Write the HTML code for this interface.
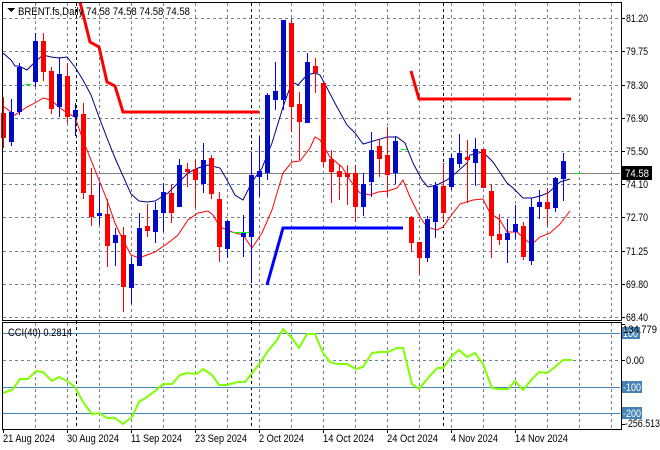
<!DOCTYPE html>
<html><head><meta charset="utf-8"><style>
html,body{margin:0;padding:0;background:#fff}
svg{display:block}
text{font-family:"Liberation Sans",sans-serif;font-size:11px;fill:#000}
</style></head><body>
<svg width="660" height="450" viewBox="0 0 660 450" xmlns="http://www.w3.org/2000/svg" shape-rendering="crispEdges">
<rect width="660" height="450" fill="#fff"/>
<g stroke="#708090" stroke-dasharray="3,3" stroke-width="1">
<path d="M3 18.5H620M3 51.5H620M3 85.5H620M3 118.5H620M3 151.5H620M3 184.5H620M3 217.5H620M3 251.5H620M3 284.5H620M3 317.5H620"/>
<path d="M35.5 3V320M67.5 3V320M99.5 3V320M131.5 3V320M163.5 3V320M195.5 3V320M227.5 3V320M259.5 3V320M291.5 3V320M323.5 3V320M355.5 3V320M387.5 3V320M419.5 3V320M451.5 3V320M483.5 3V320M515.5 3V320M547.5 3V320M579.5 3V320M611.5 3V320"/>
<path d="M35.5 323V429M67.5 323V429M99.5 323V429M131.5 323V429M163.5 323V429M195.5 323V429M227.5 323V429M259.5 323V429M291.5 323V429M323.5 323V429M355.5 323V429M387.5 323V429M419.5 323V429M451.5 323V429M483.5 323V429M515.5 323V429M547.5 323V429M579.5 323V429M611.5 323V429"/>
<path d="M3 360.5H620"/>
</g>
<g stroke="#000" stroke-dasharray="3,3"><path d="M76.5 3V429M251.5 3V429M443.5 3V429"/></g>
<path d="M3 173.5H620" stroke="#808080"/>
<g stroke="#4682b4"><path d="M3 333.5H620M3 387.5H620M3 413.5H620"/></g>
<g shape-rendering="auto" fill="none">
<polyline stroke="#ff0000" stroke-width="3" points="80,2 90,42 99,47 107,82 115,86 123,112 259,112"/>
<polyline stroke="#ff0000" stroke-width="3" points="411,71 419,99 571,99"/>
<polyline stroke="#0000ff" stroke-width="3" points="267,285 283,228 403,228"/>
<polyline stroke="#000080" stroke-width="1" points="3,53 11,60 15,66 19,66 27,70 35,62 43,55 51,57 59,58 67,57 75,67 83,80 91,95 99,117 107,138 115,158 123,176 131,194 139,201 147,202 155,201 168,193 178,183 188,173 198,168 208,165 220,168 227,180 235,195 243,200 252,182 262,168 272,143 283,107 292,82 298,85 307,75 315,73 320,75 327,88 337,107 347,125 355,133 363,144 370,142 387,137 397,137 405,143 413,163 422,180 428,187 437,185 447,180 457,172 467,163 470,155 483,152 493,162 507,183 513,188 523,198 532,198 540,196 548,193 560,182 570,179"/>
<polyline stroke="#ff0000" stroke-width="1" points="3,106 15,115 27,107 35,103 43,98 51,100 59,107 67,113 75,117 83,140 91,160 99,180 107,200 115,223 123,240 131,255 139,258 147,255 155,252 168,243 178,235 188,220 198,213 208,211 213,215 220,227 232,232 243,235 252,248 262,233 272,210 283,173 292,162 300,161 310,148 315,137 320,140 330,157 342,167 350,180 360,193 370,195 378,192 388,191 397,188 403,180 410,197 420,217 427,227 437,230 443,227 453,213 460,204 473,200 483,199 490,213 500,220 507,232 517,232 527,241 532,244 540,237 550,233 560,224 570,211"/>
</g>
<g>
<g stroke="#ff0000" fill="#ff0000">
<path d="M3.5 97V148M43.5 33V81M51.5 67V114M67.5 63V123M83.5 103V199M91.5 168V226M107.5 199V267M123.5 227V312M147.5 204V237M171.5 184V223M187.5 163V187M195.5 159V208M211.5 155V199M219.5 192V262M291.5 19V132M299.5 92V160M315.5 58V93M323.5 83V167M331.5 150V203M339.5 165V200M347.5 165V205M355.5 165V222M379.5 139V177M387.5 127V197M411.5 216V252M419.5 242V274M443.5 163V220M467.5 140V203M483.5 149V188M491.5 184V258M499.5 214V245M523.5 222V260M547.5 188V226"/>
</g>
<g fill="#ff0000">
<rect x="1" y="113" width="5" height="25"/><rect x="41" y="41" width="5" height="31"/><rect x="49" y="71" width="5" height="38"/><rect x="65" y="76" width="5" height="41"/><rect x="81" y="114" width="5" height="79"/><rect x="89" y="195" width="5" height="22"/><rect x="105" y="214" width="5" height="32"/><rect x="121" y="235" width="5" height="52"/><rect x="145" y="226" width="5" height="5"/><rect x="169" y="193" width="5" height="20"/><rect x="185" y="169" width="5" height="3"/><rect x="193" y="169" width="5" height="11"/><rect x="209" y="158" width="5" height="36"/><rect x="217" y="199" width="5" height="48"/><rect x="289" y="23" width="5" height="84"/><rect x="297" y="104" width="5" height="18"/><rect x="313" y="66" width="5" height="7"/><rect x="321" y="83" width="5" height="79"/><rect x="329" y="159" width="5" height="13"/><rect x="337" y="171" width="5" height="6"/><rect x="345" y="173" width="5" height="4"/><rect x="353" y="173" width="5" height="34"/><rect x="377" y="146" width="5" height="13"/><rect x="385" y="155" width="5" height="20"/><rect x="409" y="217" width="5" height="26"/><rect x="417" y="242" width="5" height="16"/><rect x="441" y="186" width="5" height="27"/><rect x="465" y="157" width="5" height="3"/><rect x="481" y="149" width="5" height="39"/><rect x="489" y="191" width="5" height="45"/><rect x="497" y="234" width="5" height="6"/><rect x="521" y="226" width="5" height="31"/><rect x="545" y="202" width="5" height="7"/>
</g>
<g stroke="#0000ff">
<path d="M11.5 99V146M19.5 63V115M35.5 33V87M59.5 57V117M75.5 103V136M99.5 183V225M115.5 228V266M131.5 257V304M139.5 213V266M155.5 202V243M163.5 183V232M179.5 159V207M203.5 143V193M227.5 220V258M243.5 215V257M251.5 152V283M259.5 136V197M267.5 93V180M275.5 62V110M283.5 20V110M307.5 53V123M363.5 173V216M371.5 132V197M395.5 136V184M427.5 216V262M435.5 182V238M451.5 154V190M459.5 134V168M475.5 138V186M507.5 219V263M515.5 205V239M531.5 198V265M539.5 190V219M555.5 177V212M563.5 153V201"/>
</g>
<g fill="#0010a0" stroke="#0000ff">
<rect x="9.5" y="112.5" width="4" height="29"/><rect x="17.5" y="67.5" width="4" height="44"/><rect x="33.5" y="41.5" width="4" height="40"/><rect x="57.5" y="74.5" width="4" height="32"/><rect x="73.5" y="110.5" width="4" height="6"/><rect x="97.5" y="213.5" width="4" height="2"/><rect x="113.5" y="235.5" width="4" height="7"/><rect x="129.5" y="264.5" width="4" height="23"/><rect x="137.5" y="228.5" width="4" height="37"/><rect x="153.5" y="210.5" width="4" height="21"/><rect x="161.5" y="192.5" width="4" height="20"/><rect x="177.5" y="165.5" width="4" height="41"/><rect x="201.5" y="160.5" width="4" height="23"/><rect x="225.5" y="221.5" width="4" height="27"/><rect x="241.5" y="233.5" width="4" height="3"/><rect x="249.5" y="175.5" width="4" height="61"/><rect x="257.5" y="171.5" width="4" height="5"/><rect x="265.5" y="95.5" width="4" height="77"/><rect x="273.5" y="91.5" width="4" height="8"/><rect x="281.5" y="20.5" width="4" height="79"/><rect x="305.5" y="62.5" width="4" height="60"/><rect x="361.5" y="184.5" width="4" height="22"/><rect x="369.5" y="150.5" width="4" height="31"/><rect x="393.5" y="141.5" width="4" height="31"/><rect x="425.5" y="219.5" width="4" height="38"/><rect x="433.5" y="186.5" width="4" height="35"/><rect x="449.5" y="158.5" width="4" height="28"/><rect x="457.5" y="153.5" width="4" height="10"/><rect x="473.5" y="149.5" width="4" height="13"/><rect x="505.5" y="233.5" width="4" height="6"/><rect x="513.5" y="224.5" width="4" height="7"/><rect x="529.5" y="207.5" width="4" height="53"/><rect x="537.5" y="202.5" width="4" height="4"/><rect x="553.5" y="178.5" width="4" height="29"/><rect x="561.5" y="161.5" width="4" height="17"/>
</g>
<g stroke="#00ff00"><path d="M25 84.5H31M233 232.5H249M401 149.5H407M574 173.5H580"/></g>
</g>
<polyline shape-rendering="auto" fill="none" stroke="#7fff00" stroke-width="2" points="3,393 12,390 20,379 28,379 36,371 43,372 52,381 59,377 67,381 75,387 83,402 92,414 99,413 107,418 115,418 123,424 132,417 139,402 147,397 155,391 163,384 172,384 180,375 187,373 197,374 203,369 212,375 219,385 227,385 237,382 245,382 253,372 260,363 268,351 277,340 283,329 292,338 299,348 307,334 315,334 323,353 330,362 337,364 347,364 356,369 363,367 372,353 380,352 388,352 397,348 403,348 412,384 419,389 428,378 437,368 443,368 452,356 459,350 467,357 475,353 483,364 492,388 498,389 508,389 515,381 523,390 532,379 539,372 547,373 555,367 563,360 572,360"/>
<g fill="none" stroke="#000">
<path d="M2.5 2.5H621.5V320.5H2.5Z"/>
<path d="M2.5 322.5H621.5V429.5H2.5Z"/>
</g>
<g stroke="#000"><path d="M621 18.5h4M621 51.5h4M621 85.5h4M621 118.5h4M621 151.5h4M621 184.5h4M621 217.5h4M621 251.5h4M621 284.5h4M621 317.5h4M621 360.5h4M621 324.5h4M621 424.5h4M3.5 429v4M67.5 429v4M131.5 429v4M195.5 429v4M259.5 429v4M323.5 429v4M387.5 429v4M451.5 429v4M515.5 429v4"/></g>
<path d="M7 8h8l-4 4z" fill="#000"/>
<text x="18" y="15" textLength="172" lengthAdjust="spacingAndGlyphs">BRENT.fs,Daily  74.58 74.58 74.58 74.58</text>
<text x="8" y="336" textLength="64" lengthAdjust="spacingAndGlyphs">CCI(40) 0.2814</text>
<g>
<text x="626" y="22" textLength="22" lengthAdjust="spacingAndGlyphs">81.20</text><text x="626" y="55" textLength="22" lengthAdjust="spacingAndGlyphs">79.75</text><text x="626" y="89" textLength="22" lengthAdjust="spacingAndGlyphs">78.30</text><text x="626" y="122" textLength="22" lengthAdjust="spacingAndGlyphs">76.90</text><text x="626" y="155" textLength="22" lengthAdjust="spacingAndGlyphs">75.50</text><text x="626" y="188" textLength="22" lengthAdjust="spacingAndGlyphs">74.10</text><text x="626" y="221" textLength="22" lengthAdjust="spacingAndGlyphs">72.70</text><text x="626" y="255" textLength="22" lengthAdjust="spacingAndGlyphs">71.25</text><text x="626" y="288" textLength="22" lengthAdjust="spacingAndGlyphs">69.80</text><text x="626" y="321" textLength="22" lengthAdjust="spacingAndGlyphs">68.40</text>
<rect x="622" y="166" width="30" height="14" fill="#000"/><text x="625" y="177" style="fill:#fff" textLength="24" lengthAdjust="spacingAndGlyphs">74.58</text>
<rect x="622" y="327" width="18" height="12" fill="#4682b4"/><text x="623" y="337" style="fill:#fff" textLength="15" lengthAdjust="spacingAndGlyphs">100</text>
<text x="623" y="333" textLength="34" lengthAdjust="spacingAndGlyphs">134.779</text>
<text x="626" y="364" textLength="18" lengthAdjust="spacingAndGlyphs">0.00</text>
<rect x="622" y="381" width="20" height="12" fill="#4682b4"/><text x="623" y="391" style="fill:#fff" textLength="18" lengthAdjust="spacingAndGlyphs">-100</text>
<rect x="622" y="407" width="20" height="12" fill="#4682b4"/><text x="623" y="417" style="fill:#fff" textLength="18" lengthAdjust="spacingAndGlyphs">-200</text>
<text x="625" y="427" textLength="35" lengthAdjust="spacingAndGlyphs">-256.513</text>
</g>
<g>
<text x="3" y="442" textLength="52" lengthAdjust="spacingAndGlyphs">21 Aug 2024</text><text x="67" y="442" textLength="52" lengthAdjust="spacingAndGlyphs">30 Aug 2024</text><text x="131" y="442" textLength="51" lengthAdjust="spacingAndGlyphs">11 Sep 2024</text><text x="195" y="442" textLength="52" lengthAdjust="spacingAndGlyphs">23 Sep 2024</text><text x="259" y="442" textLength="45" lengthAdjust="spacingAndGlyphs">2 Oct 2024</text><text x="323" y="442" textLength="51" lengthAdjust="spacingAndGlyphs">14 Oct 2024</text><text x="387" y="442" textLength="51" lengthAdjust="spacingAndGlyphs">24 Oct 2024</text><text x="451" y="442" textLength="47" lengthAdjust="spacingAndGlyphs">4 Nov 2024</text><text x="515" y="442" textLength="53" lengthAdjust="spacingAndGlyphs">14 Nov 2024</text>
</g>
</svg>
</body></html>
